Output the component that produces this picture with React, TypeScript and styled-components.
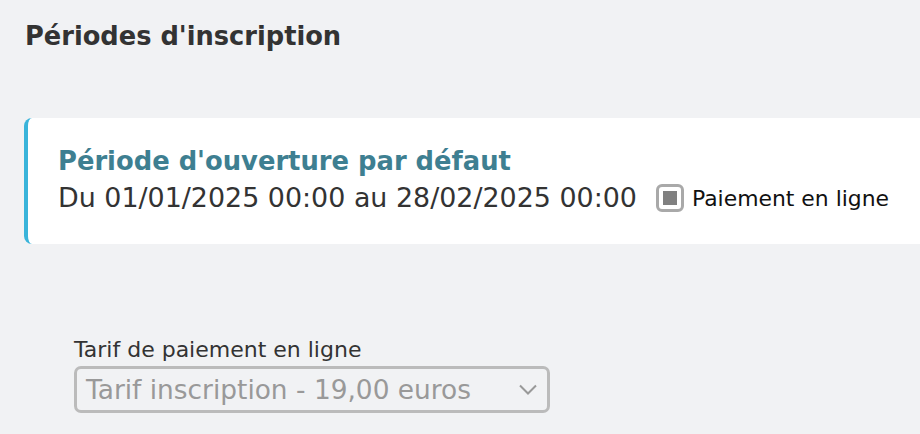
import React from "react";
import styled, { createGlobalStyle } from "styled-components";

const GlobalStyle = createGlobalStyle`
  html, body {
    margin: 0;
    padding: 0;
    background: #f1f2f4;
    overflow: hidden;
  }
  body {
    font-family: "DejaVu Sans", Verdana, sans-serif;
    color: #333;
  }
`;

const Page = styled.div`
  display: flex;
  flex-direction: column;
  padding: 20px 0 0 24px;
  width: 920px;
  box-sizing: border-box;
`;

const PageTitle = styled.h1`
  margin: 0 0 0 1px;
  font-size: 25.7px;
  font-weight: bold;
  color: #333;
  line-height: 32px;
`;

const Card = styled.div`
  margin-top: 66px;
  margin-right: -20px;
  background: #fff;
  border-left: 4px solid #3ab4da;
  border-radius: 8px;
  padding: 28px 30px 31px;
  display: flex;
  flex-direction: column;
  gap: 7px;
`;

const CardTitle = styled.div`
  font-size: 25.8px;
  font-weight: bold;
  color: #3e7f91;
  line-height: 30px;
`;

const CardRow = styled.div`
  display: flex;
  align-items: center;
  gap: 19px;
`;

const Dates = styled.span`
  font-size: 26.9px;
  color: #333;
  line-height: 30px;
`;

const CheckWrap = styled.label`
  display: flex;
  align-items: center;
  gap: 8px;
  font-size: 21.9px;
  color: #111;
`;

const CheckBox = styled.span`
  width: 28px;
  height: 28px;
  box-sizing: border-box;
  border: 3px solid #a9a9a9;
  border-radius: 6px;
  display: flex;
  align-items: center;
  justify-content: center;
  &::after {
    content: "";
    width: 14px;
    height: 14px;
    background: #808080;
  }
`;

const Field = styled.div`
  margin: 93px 0 0 50px;
  display: flex;
  flex-direction: column;
  gap: 3px;
`;

const FieldLabel = styled.label`
  font-size: 22px;
  color: #333;
  line-height: 26px;
`;

const Select = styled.div`
  width: 476px;
  height: 47px;
  flex-shrink: 0;
  box-sizing: border-box;
  border: 3px solid #bbbbbb;
  border-radius: 7px;
  display: flex;
  align-items: center;
  justify-content: space-between;
  padding: 0 10px 0 9px;
  font-size: 26.4px;
  color: #999;
`;

export default function App() {
  return (
    <>
      <GlobalStyle />
      <Page>
        <PageTitle>Périodes d'inscription</PageTitle>
        <Card>
          <CardTitle>Période d'ouverture par défaut</CardTitle>
          <CardRow>
            <Dates>Du 01/01/2025 00:00 au 28/02/2025 00:00</Dates>
            <CheckWrap>
              <CheckBox />
              Paiement en ligne
            </CheckWrap>
          </CardRow>
        </Card>
        <Field>
          <FieldLabel>Tarif de paiement en ligne</FieldLabel>
          <Select>
            <span>Tarif inscription - 19,00 euros</span>
            <svg width="18" height="11" viewBox="0 0 18 11">
              <path d="M1 1.5 L9 9.5 L17 1.5" fill="none" stroke="#999" strokeWidth="2" />
            </svg>
          </Select>
        </Field>
      </Page>
    </>
  );
}
